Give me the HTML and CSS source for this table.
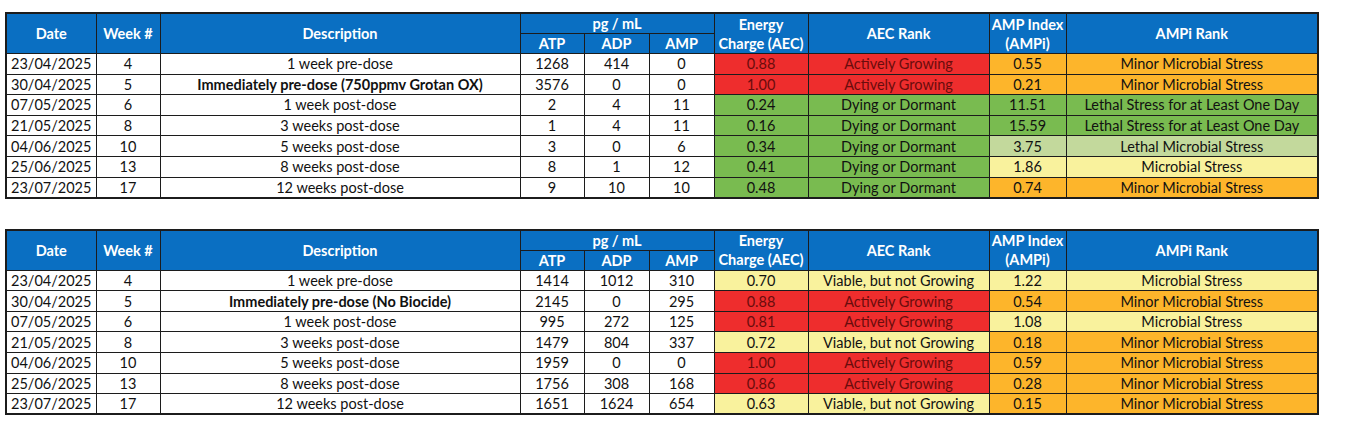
FILE: index.html
```html
<!DOCTYPE html>
<html>
<head>
<meta charset="utf-8">
<link rel="stylesheet" href="styles.css">
</head>
<body>
<div class="page">
<table class="grid">
  <colgroup>
    <col class="c-date"><col class="c-week"><col class="c-desc"><col class="c-num"><col class="c-num2"><col class="c-num2"><col class="c-aec"><col class="c-aecr"><col class="c-ampi"><col class="c-ampir">
  </colgroup>
  <thead>
    <tr class="h1"><th rowspan="2">Date</th><th rowspan="2">Week #</th><th rowspan="2">Description</th><th colspan="3">pg / mL</th><th rowspan="2">Energy<br>Charge (AEC)</th><th rowspan="2">AEC Rank</th><th rowspan="2">AMP Index<br>(AMPi)</th><th rowspan="2">AMPi Rank</th></tr>
    <tr class="h2"><th>ATP</th><th>ADP</th><th>AMP</th></tr>
  </thead>
  <tbody>
    <tr><td>23/04/2025</td><td>4</td><td>1 week pre-dose</td><td>1268</td><td>414</td><td>0</td><td class="red">0.88</td><td class="red">Actively Growing</td><td class="orange">0.55</td><td class="orange">Minor Microbial Stress</td></tr>
    <tr><td>30/04/2025</td><td>5</td><td class="b">Immediately pre-dose (750ppmv Grotan OX)</td><td>3576</td><td>0</td><td>0</td><td class="red">1.00</td><td class="red">Actively Growing</td><td class="orange">0.21</td><td class="orange">Minor Microbial Stress</td></tr>
    <tr><td>07/05/2025</td><td>6</td><td>1 week post-dose</td><td>2</td><td>4</td><td>11</td><td class="green">0.24</td><td class="green">Dying or Dormant</td><td class="green">11.51</td><td class="green">Lethal Stress for at Least One Day</td></tr>
    <tr><td>21/05/2025</td><td>8</td><td>3 weeks post-dose</td><td>1</td><td>4</td><td>11</td><td class="green">0.16</td><td class="green">Dying or Dormant</td><td class="green">15.59</td><td class="green">Lethal Stress for at Least One Day</td></tr>
    <tr><td>04/06/2025</td><td>10</td><td>5 weeks post-dose</td><td>3</td><td>0</td><td>6</td><td class="green">0.34</td><td class="green">Dying or Dormant</td><td class="lgreen">3.75</td><td class="lgreen">Lethal Microbial Stress</td></tr>
    <tr><td>25/06/2025</td><td>13</td><td>8 weeks post-dose</td><td>8</td><td>1</td><td>12</td><td class="green">0.41</td><td class="green">Dying or Dormant</td><td class="yellow">1.86</td><td class="yellow">Microbial Stress</td></tr>
    <tr><td>23/07/2025</td><td>17</td><td>12 weeks post-dose</td><td>9</td><td>10</td><td>10</td><td class="green">0.48</td><td class="green">Dying or Dormant</td><td class="orange">0.74</td><td class="orange">Minor Microbial Stress</td></tr>
  </tbody>
</table>

<table class="grid">
  <colgroup>
    <col class="c-date"><col class="c-week"><col class="c-desc"><col class="c-num"><col class="c-num2"><col class="c-num2"><col class="c-aec"><col class="c-aecr"><col class="c-ampi"><col class="c-ampir">
  </colgroup>
  <thead>
    <tr class="h1"><th rowspan="2">Date</th><th rowspan="2">Week #</th><th rowspan="2">Description</th><th colspan="3">pg / mL</th><th rowspan="2">Energy<br>Charge (AEC)</th><th rowspan="2">AEC Rank</th><th rowspan="2">AMP Index<br>(AMPi)</th><th rowspan="2">AMPi Rank</th></tr>
    <tr class="h2"><th>ATP</th><th>ADP</th><th>AMP</th></tr>
  </thead>
  <tbody>
    <tr><td>23/04/2025</td><td>4</td><td>1 week pre-dose</td><td>1414</td><td>1012</td><td>310</td><td class="yellow">0.70</td><td class="yellow">Viable, but not Growing</td><td class="yellow">1.22</td><td class="yellow">Microbial Stress</td></tr>
    <tr><td>30/04/2025</td><td>5</td><td class="b">Immediately pre-dose (No Biocide)</td><td>2145</td><td>0</td><td>295</td><td class="red">0.88</td><td class="red">Actively Growing</td><td class="orange">0.54</td><td class="orange">Minor Microbial Stress</td></tr>
    <tr><td>07/05/2025</td><td>6</td><td>1 week post-dose</td><td>995</td><td>272</td><td>125</td><td class="red">0.81</td><td class="red">Actively Growing</td><td class="yellow">1.08</td><td class="yellow">Microbial Stress</td></tr>
    <tr><td>21/05/2025</td><td>8</td><td>3 weeks post-dose</td><td>1479</td><td>804</td><td>337</td><td class="yellow">0.72</td><td class="yellow">Viable, but not Growing</td><td class="orange">0.18</td><td class="orange">Minor Microbial Stress</td></tr>
    <tr><td>04/06/2025</td><td>10</td><td>5 weeks post-dose</td><td>1959</td><td>0</td><td>0</td><td class="red">1.00</td><td class="red">Actively Growing</td><td class="orange">0.59</td><td class="orange">Minor Microbial Stress</td></tr>
    <tr><td>25/06/2025</td><td>13</td><td>8 weeks post-dose</td><td>1756</td><td>308</td><td>168</td><td class="red">0.86</td><td class="red">Actively Growing</td><td class="orange">0.28</td><td class="orange">Minor Microbial Stress</td></tr>
    <tr><td>23/07/2025</td><td>17</td><td>12 weeks post-dose</td><td>1651</td><td>1624</td><td>654</td><td class="yellow">0.63</td><td class="yellow">Viable, but not Growing</td><td class="orange">0.15</td><td class="orange">Minor Microbial Stress</td></tr>
  </tbody>
</table>
</div>
</body>
</html>
```

FILE: styles.css
```css
html, body {
  margin: 0;
  padding: 0;
  background: #ffffff;
}
.page {
  padding: 12px 0 0 5px;
  display: flex;
  flex-direction: column;
  gap: 30px;
  font-family: Lato, "Open Sans", sans-serif;
  font-size: 14.5px;
  color: #111111;
}
.grid {
  border-collapse: collapse;
  table-layout: fixed;
  width: 1312px;
  border: 2px solid #1c1c1c;
}
.c-date { width: 90px; }
.c-week { width: 64px; }
.c-desc { width: 360px; }
.c-num { width: 64px; }
.c-num2 { width: 65px; }
.c-aec { width: 94px; }
.c-aecr { width: 181px; }
.c-ampi { width: 77px; }
.c-ampir { width: 252px; }
.grid th {
  background: #0a6fc2;
  color: #ffffff;
  font-weight: 700;
  font-size: 14.5px;
  padding: 0;
  line-height: 19px;
  border: 1.5px solid #1c1c1c;
  text-align: center;
  vertical-align: middle;
}
.grid tr.h1 { height: 20px; }
.grid tr.h2 { height: 20px; }
.grid tr.h2 th { border-top: 1px solid #1c1c1c; line-height: 17px; }
.grid tbody tr { height: 20.6px; }
.grid td {
  padding: 0;
  line-height: 15px;
  border: 1.5px solid #1c1c1c;
  text-align: center;
  vertical-align: middle;
  white-space: nowrap;
}
.grid td.b { font-weight: 700; }
.grid td.red { background: #ee2d2d; color: #6a0c0c; }
.grid td.green { background: #79bb50; }
.grid td.lgreen { background: #c3d99c; }
.grid td.yellow { background: #f9f29d; }
.grid td.orange { background: #fdb52b; }
```
